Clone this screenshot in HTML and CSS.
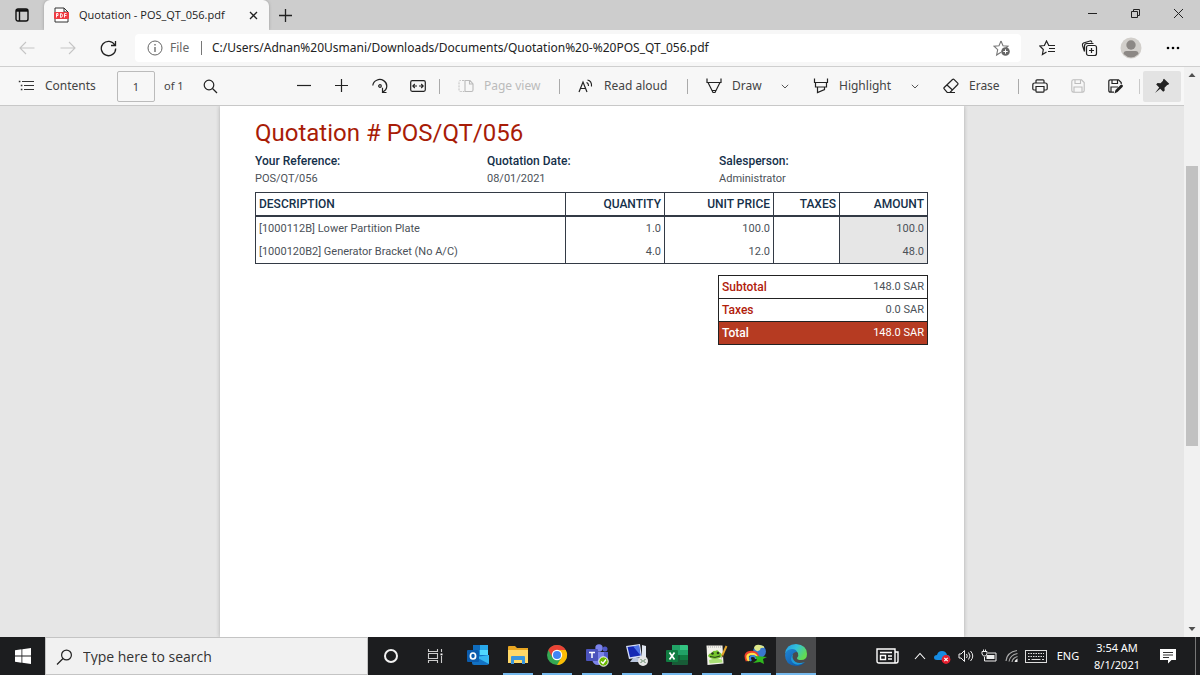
FILE: index.html
```html
<!DOCTYPE html>
<html lang="en">
<head>
<meta charset="utf-8">
<title>Quotation - POS_QT_056.pdf</title>
<link rel="stylesheet" href="styles.css">
</head>
<body>
<header class="titlebar">
  <button class="tab-actions" aria-label="Tab actions menu">
    <svg width="14" height="14" viewBox="0 0 14 14"><rect x="1" y="1" width="12" height="12" rx="2" fill="none" stroke="#111" stroke-width="1.400"/><path d="M1 2.500h12" stroke="#111" stroke-width="2.400"/><path d="M4.500 3v10" stroke="#111" stroke-width="1.400"/></svg>
  </button>
  <div class="tab">
    <svg width="15" height="16" viewBox="0 0 15 16"><path d="M1 15V1h9l4 4v10z" fill="#fff" stroke="#333"/><path d="M10 1v4h4" fill="none" stroke="#333"/><rect x="0" y="5" width="15" height="7" rx="1" fill="#ee3b42"/><path d="M2.500 10.500V6.500h1.500v2H2.500M6.500 6.500v4q2 0 2-2t-2-2M10.500 10.500v-4h2M10.500 8.500h2" fill="none" stroke="#fff" stroke-width=".9"/></svg>
    <span class="tab-title">Quotation - POS_QT_056.pdf</span>
    <button class="tab-close" aria-label="Close tab"><svg width="9" height="9" viewBox="0 0 9 9"><path d="M1 1l7 7M8 1L1 8" stroke="#222" stroke-width="1.300"/></svg></button>
  </div>
  <button class="new-tab" aria-label="New tab"><svg width="13" height="13" viewBox="0 0 13 13"><path d="M6.500 0v13M0 6.500h13" stroke="#222" stroke-width="1.300"/></svg></button>
  <div class="window-controls">
    <button aria-label="Minimize"><svg width="11" height="11" viewBox="0 0 11 11"><path d="M1 5.500h9" stroke="#222"/></svg></button>
    <button aria-label="Restore"><svg width="11" height="11" viewBox="0 0 11 11"><path d="M1.500 3.500h6v6h-6zM3.500 3.500v-2h6v6h-2" fill="none" stroke="#222"/></svg></button>
    <button aria-label="Close"><svg width="11" height="11" viewBox="0 0 11 11"><path d="M1 1l9 9M10 1l-9 9" stroke="#222"/></svg></button>
  </div>
</header>

<nav class="navbar">
  <button class="nav-button" aria-label="Back" disabled><svg width="16" height="14" viewBox="0 0 16 14"><path d="M15.500 7H1M7 1L1 7l6 6" fill="none" stroke="#c5c5c5" stroke-width="1.100"/></svg></button>
  <button class="nav-button" aria-label="Forward" disabled><svg width="16" height="14" viewBox="0 0 16 14"><path d="M.5 7H15M9 1l6 6-6 6" fill="none" stroke="#c5c5c5" stroke-width="1.100"/></svg></button>
  <button class="nav-button" aria-label="Refresh"><svg width="17" height="17" viewBox="0 0 17 17"><path d="M14.800 5A7.200 7.200 0 1 0 15.700 8.500M15.500 1v4.500H11" fill="none" stroke="#222" stroke-width="1.300"/></svg></button>
  <div class="address">
    <svg width="16" height="16" viewBox="0 0 16 16"><circle cx="8" cy="8" r="7" fill="none" stroke="#666"/><path d="M8 7v5M8 4v1.500" stroke="#555" stroke-width="1.200"/></svg>
    <span class="scheme">File</span>
    <input class="url" aria-label="Address" value="C:/Users/Adnan%20Usmani/Downloads/Documents/Quotation%20-%20POS_QT_056.pdf">
    <button class="favorite" aria-label="Add to favorites"><svg width="18" height="17" viewBox="0 0 18 17"><path d="M8 1l2 4.700 5 .5-2 1.800M8 1L6 5.700 1 6.200l3.700 3.400L3.600 15 8 12.200" fill="none" stroke="#777" stroke-width="1.100"/><circle cx="12.500" cy="11.500" r="4.300" fill="#666"/><path d="M12.500 9.300v4.400M10.300 11.500h4.400" stroke="#fff"/></svg></button>
  </div>
  <div class="nav-actions">
    <button aria-label="Favorites"><svg width="17" height="16" viewBox="0 0 17 16"><path d="M10 5.500h-.2L7.500 1 5.400 5.500.8 6l3.500 3.500-.9 5L7.500 12" fill="none" stroke="#222" stroke-width="1.200"/><path d="M9.500 5.500H16M10 8.500h6M9 11.500h7" stroke="#222" stroke-width="1.200"/></svg></button>
    <button aria-label="Collections"><svg width="17" height="17" viewBox="0 0 17 17"><rect x="5.500" y="5.500" width="10" height="10" rx="2" fill="none" stroke="#222" stroke-width="1.200"/><path d="M10.500 8v5M8 10.500h5M3.500 11.500L1.500 5.500Q1 3.700 2.500 3L9 1Q10.500.7 11 2.500M3.500 11.500V6q0-2.500 2.500-2.500h6.500" fill="none" stroke="#222" stroke-width="1.200"/></svg></button>
    <button aria-label="Profile"><svg width="22" height="22" viewBox="0 0 22 22"><circle cx="11" cy="11" r="10.500" fill="#d2cfcb"/><circle cx="11" cy="8" r="4.700" fill="#8c8885"/><path d="M3.500 17q0-3 3-3h9q3 0 3 3-7.500 7-15 0" fill="#8c8885"/></svg></button>
    <button aria-label="Settings and more"><svg width="14" height="4" viewBox="0 0 14 4"><circle cx="2" cy="2" r="1.300"/><circle cx="7" cy="2" r="1.300"/><circle cx="12" cy="2" r="1.300"/></svg></button>
  </div>
</nav>

<main class="viewer">
  <div class="reader">
    <div class="toolbar">
      <button class="tool contents"><svg width="17" height="14" viewBox="0 0 17 14"><path d="M4 2.500h12M6 6.500h10M6 10.500h10" stroke="#333" stroke-width="1.200"/><path d="M.8 2.500h1.600M2.800 6.500h1.600M2.800 10.500h1.600" stroke="#333" stroke-width="1.600"/></svg>Contents</button>
      <input class="page-number" aria-label="Page number" value="1">
      <span class="page-count">of 1</span>
      <button class="tool icon" aria-label="Find"><svg width="15" height="15" viewBox="0 0 15 15"><circle cx="6" cy="6" r="4.800" fill="none" stroke="#222" stroke-width="1.200"/><path d="M9.500 9.500l4.500 4.500" stroke="#222" stroke-width="1.200"/></svg></button>
      <div class="tool-group">
        <button class="tool icon" aria-label="Zoom out"><svg width="14" height="14" viewBox="0 0 14 14"><path d="M0 6.500h14" stroke="#222" stroke-width="1.200"/></svg></button>
        <button class="tool icon" aria-label="Zoom in"><svg width="14" height="14" viewBox="0 0 14 14"><path d="M0 6.500h13M6.500 0v13" stroke="#222" stroke-width="1.200"/></svg></button>
        <button class="tool icon" aria-label="Rotate"><svg width="16" height="16" viewBox="0 0 16 16"><path d="M.8 7.500A7 6.500 0 1 1 11 13.800M10.500 9.800V14.500h4" fill="none" stroke="#222" stroke-width="1.200"/><circle cx="8" cy="8" r="1.300" fill="none" stroke="#222" stroke-width="1.200"/></svg></button>
        <button class="tool icon" aria-label="Fit to width"><svg width="16" height="14" viewBox="0 0 16 14"><rect x=".7" y="1.700" width="14.600" height="10.600" rx="1.500" fill="none" stroke="#222" stroke-width="1.200"/><path d="M2.800 7H7M9 7h4.200M4.800 5l-2 2 2 2M11.200 5l2 2-2 2" fill="none" stroke="#222" stroke-width="1.100"/></svg></button>
        <span class="separator"></span>
        <button class="tool page-view" disabled><svg width="16" height="14" viewBox="0 0 16 14"><path d="M6 1.500H2.500q-1.500 0-1.500 1.500v8q0 1.500 1.500 1.500H6" fill="none" stroke="#c0c0c0" stroke-dasharray="2 1"/><path d="M7 1.500h5l3 3.500v6q0 1.500-1.500 1.500H7zM11.500 1.500V5H15" fill="none" stroke="#bbb" stroke-width="1.100"/></svg>Page view</button>
        <span class="separator"></span>
        <button class="tool read-aloud"><svg width="16" height="15" viewBox="0 0 16 15"><path d="M1 13L5 3l4 10M2.500 9.500h5" fill="none" stroke="#222" stroke-width="1.200"/><path d="M8.500 3.500Q10.500 4 10.500 7M9.500 1Q14 2 13.500 7.500" fill="none" stroke="#222" stroke-width="1.100"/></svg>Read aloud</button>
        <span class="separator"></span>
        <button class="tool draw"><svg width="16" height="16" viewBox="0 0 16 16"><path d="M1 .5v4h14v-4M2 4.500l5 10h2l5-10M6 12.500h4" fill="none" stroke="#222" stroke-width="1.200"/></svg>Draw</button>
        <button class="tool icon" aria-label="Draw options"><svg width="8" height="5" viewBox="0 0 8 5"><path d="M.8.8L4 4 7.200.8" fill="none" stroke="#555"/></svg></button>
        <button class="tool highlight"><svg width="16" height="16" viewBox="0 0 16 16"><path d="M1.500.5v4h13v-4M2.500 4.500v4.500h11V4.500M4.500 9v5.500l7-3V9" fill="none" stroke="#222" stroke-width="1.200"/></svg>Highlight</button>
        <button class="tool icon" aria-label="Highlight options"><svg width="8" height="5" viewBox="0 0 8 5"><path d="M.8.8L4 4 7.200.8" fill="none" stroke="#555"/></svg></button>
        <button class="tool erase"><svg width="16" height="16" viewBox="0 0 16 16"><path d="M9.500 1.500L1.200 9.500q-.7.700 0 1.400l3 3.600H7l7.700-8q.6-.7 0-1.400l-3.500-3.500q-.8-.8-1.700-.1zM4 7l5.500 5M4 14.500h8" fill="none" stroke="#222" stroke-width="1.200"/></svg>Erase</button>
        <span class="separator"></span>
        <button class="tool icon" aria-label="Print"><svg width="16" height="14" viewBox="0 0 16 14"><path d="M4 4V1.800q0-1 1-1h6q1 0 1 1V4M4 11H2q-1.200 0-1.200-1.200V6q0-2 2-2h10.400q2 0 2 2v3.800Q15.200 11 14 11h-2M4 7.500h8v4.700q0 1-1 1H5q-1 0-1-1z" fill="none" stroke="#222" stroke-width="1.200"/></svg></button>
        <button class="tool icon" aria-label="Save" disabled><svg width="14" height="14" viewBox="0 0 14 14"><path d="M2.500.8h8l2.700 2.700v8q0 1.700-1.700 1.700h-9Q.8 13.200.8 11.500v-9Q.8.8 2.500.8zM4 .8v3.700h5.500V.8M3 13V8h8v5" fill="none" stroke="#bdbdbd" stroke-width="1.100"/></svg></button>
        <button class="tool icon" aria-label="Save as"><svg width="16" height="15" viewBox="0 0 16 15"><path d="M6 13.200H2.500Q.8 13.200.8 11.500v-9Q.8.8 2.500.8h8L13.200 3.500V5M4 .8v3.700h5.500V.8M3 13V8h7" fill="none" stroke="#222" stroke-width="1.200"/><path d="M6.500 14.500l1-3.500 5-5q1-.8 2 0t0 2l-5 5z" fill="#222"/></svg></button>
        <span class="separator light"></span>
        <button class="tool icon pinned" aria-label="Unpin toolbar"><svg width="16" height="16" viewBox="0 0 16 16"><path d="M10 .8l5.200 5-1 1-1 .2-2.700 2.800.2 2.700-1.500 1.200-3-3L1 15l4.200-5.500-3-3L3.500 5l3 .2L9 2.700v-1z" fill="#222"/></svg></button>
      </div>
    </div>

    <div class="canvas">
      <article class="page">
        <h1>Quotation # POS/QT/056</h1>
        <dl class="details">
          <div><dt>Your Reference:</dt><dd>POS/QT/056</dd></div>
          <div><dt>Quotation Date:</dt><dd>08/01/2021</dd></div>
          <div><dt>Salesperson:</dt><dd>Administrator</dd></div>
        </dl>
        <table class="lines">
          <colgroup><col><col class="c-quantity"><col class="c-price"><col class="c-taxes"><col class="c-amount"></colgroup>
          <thead><tr><th scope="col">DESCRIPTION</th><th scope="col">QUANTITY</th><th scope="col">UNIT PRICE</th><th scope="col">TAXES</th><th scope="col">AMOUNT</th></tr></thead>
          <tbody>
            <tr><td>[1000112B] Lower Partition Plate</td><td>1.0</td><td>100.0</td><td></td><td>100.0</td></tr>
            <tr><td>[1000120B2] Generator Bracket (No A/C)</td><td>4.0</td><td>12.0</td><td></td><td>48.0</td></tr>
          </tbody>
        </table>
        <table class="totals">
          <tr><th scope="row">Subtotal</th><td>148.0 SAR</td></tr>
          <tr><th scope="row">Taxes</th><td>0.0 SAR</td></tr>
          <tr class="grand"><th scope="row">Total</th><td>148.0 SAR</td></tr>
        </table>
      </article>
    </div>
  </div>
  <div class="scrollbar">
    <svg width="16" height="16" viewBox="0 0 16 16"><path d="M4.500 10L8 6l3.500 4z" fill="#505050"/></svg>
    <div class="track"><div class="thumb"></div></div>
    <svg width="16" height="16" viewBox="0 0 16 16"><path d="M4.500 6L8 10l3.500-4z" fill="#505050"/></svg>
  </div>
</main>

<footer class="taskbar">
  <button class="start" aria-label="Start"><svg width="16" height="16" viewBox="0 0 16 16"><path d="M0 2.300L6.500 1.300V7.500H0zM7.300 1.200L16 0v7.500H7.300zM0 8.400h6.500v6.300L0 13.700zM7.300 8.400H16V16l-8.700-1.200z" fill="#fff"/></svg></button>
  <label class="search">
    <svg width="17" height="17" viewBox="0 0 17 17"><circle cx="10.500" cy="6" r="4.900" fill="none" stroke="#222" stroke-width="1.200"/><path d="M7 9.500L1 15.500" stroke="#222" stroke-width="1.300"/></svg>
    <input placeholder="Type here to search" aria-label="Type here to search">
  </label>
  <button class="system" aria-label="Cortana"><svg width="16" height="16" viewBox="0 0 16 16"><circle cx="8" cy="8" r="6" fill="none" stroke="#f2f2f2" stroke-width="2"/></svg></button>
  <button class="system" aria-label="Task view"><svg width="17" height="16" viewBox="0 0 17 16"><path d="M1.500 1v2.500h9V1M1.500 15v-2.500h9V15M1.500 5.500h9v5h-9zM14.500 1v3M14.500 8v7" fill="none" stroke="#ccc" stroke-width="1.100"/><path d="M13.500 5.500h2v1.800h-2z" fill="#fff"/></svg></button>
  <div class="apps">
    <button aria-label="Outlook"><svg width="24" height="22" viewBox="0 0 24 22"><path d="M7 1h15v10H7z" fill="#1490df"/><path d="M7 1h7v5H7z" fill="#0f6cbd"/><path d="M14 6h8v5h-8z" fill="#50d9ff"/><path d="M14 1h8v5h-8z" fill="#28a8ea"/><path d="M6 11l17 0v8q0 2-2 2H8q-2 0-2-2z" fill="#1272c4"/><path d="M23 11v9L10 13z" fill="#35b8f1"/><rect x="1" y="6" width="12" height="12" rx="1" fill="#0b5cad"/><ellipse cx="7" cy="12" rx="2.600" ry="3" fill="none" stroke="#fff" stroke-width="1.700"/></svg></button>
    <button class="running" aria-label="File Explorer"><svg width="22" height="20" viewBox="0 0 22 20"><path d="M1 2q0-1 1-1h6l2 2h11v5H1z" fill="#e8a622"/><path d="M1 5h20v13H1z" fill="#ffd867"/><path d="M4 19v-7q0-1 1-1h12q1 0 1 1v7h-3v-4H7v4z" fill="#3a96dd"/></svg></button>
    <button class="running" aria-label="Chrome"><svg width="22" height="22" viewBox="0 0 22 22"><circle cx="11" cy="11" r="10" fill="#34a853"/><path d="M11 11L2.300 6A10 10 0 0 1 19.700 6z" fill="#ea4335"/><path d="M11 6h8.700A10 10 0 0 1 11 21l4.500-7.500z" fill="#fbbc05"/><path d="M2.300 6L6.500 13.500 11 11V6z" fill="#ea4335"/><circle cx="11" cy="11" r="5.200" fill="#fff"/><circle cx="11" cy="11" r="4" fill="#4285f4"/></svg></button>
    <button class="running" aria-label="Teams"><svg width="24" height="24" viewBox="0 0 24 24"><circle cx="20" cy="6" r="2.500" fill="#5059c9"/><circle cx="14" cy="5" r="3.700" fill="#7b83eb"/><path d="M17 9h6v7q-1 3-5 2z" fill="#5059c9"/><path d="M8 9h11v7q-1 6-6 6t-6-6z" fill="#7b83eb"/><rect x="1" y="6" width="12" height="12" rx="1" fill="#4b53bc"/><path d="M4 9.500h6M7 9.500V15" stroke="#fff" stroke-width="1.500"/><circle cx="18.500" cy="18.500" r="4.700" fill="#6bb700" stroke="#fff"/><path d="M16 18.500l2 2 3-4" fill="none" stroke="#fff" stroke-width="1.400"/></svg></button>
    <button class="running" aria-label="Remote session"><svg width="24" height="24" viewBox="0 0 24 24"><path d="M1 3l14-2 2 13-13 2z" fill="#d5def5"/><path d="M2.500 4L14 2.500l1.500 10-10.500 1.700z" fill="#1428b4"/><path d="M8 3.200l6-.7 1.500 10z" fill="#4e75e8"/><path d="M17 2l4 1v12h-4z" fill="#dfe5ee"/><path d="M8 15h6l2 4H5z" fill="#b8c5dd"/><circle cx="18" cy="18" r="5" fill="#e5e5e5"/><path d="M15.500 16l2 2-2 2M20.500 16l-2 2 2 2" fill="none" stroke="#58805c"/></svg></button>
    <button class="running" aria-label="Excel"><svg width="24" height="22" viewBox="0 0 24 22"><path d="M7 1h8v20H8q-1 0-1-1z" fill="#21a366"/><path d="M15 1h7q1 0 1 1v4h-8z" fill="#33c481"/><path d="M15 6h8v5h-8z" fill="#21a366"/><path d="M7 11h16v9q0 1-1 1H8q-1 0-1-1z" fill="#185c37"/><path d="M15 11h8v5h-8z" fill="#107c41"/><rect x="1" y="6" width="12" height="12" rx="1" fill="#107c41"/><path d="M4.500 8.500l5 7M9.500 8.500l-5 7" stroke="#fff" stroke-width="1.700"/></svg></button>
    <button class="running" aria-label="Notepad++"><svg width="24" height="24" viewBox="0 0 24 24"><path d="M1.500 2.500h16l1 18-16 1.500z" fill="#f3f2ea"/><path d="M3 4h14" stroke="#aaa" stroke-dasharray="1 1"/><path d="M3 13q1-3 4-3 1-3 3-2 3-2 4 1 3 1 3 4-2 3-7 3t-7-3z" fill="#76c52e"/><circle cx="7.500" cy="10.500" r="1.300" fill="#263c19"/><circle cx="13" cy="10" r="1.300" fill="#263c19"/><path d="M5 13.500q5 2 10-.5" fill="none" stroke="#263c19"/><path d="M4 17q6-2 13-.5l.5 3-13 1z" fill="#a9df75"/><path d="M21.500 3L17 13" stroke="#e3a52c" stroke-width="2"/><path d="M17.500 12L16 16l2.500-3.200z" fill="#654724"/></svg></button>
    <button class="running" aria-label="Download manager"><svg width="24" height="22" viewBox="0 0 24 22"><circle cx="15.500" cy="7.500" r="6.500" fill="#3977ce"/><path d="M10 4q1-4 6-3 5 1 4 3-4-1-4 2-4 3-6-2z" fill="#dfe98b"/><path d="M3 17Q-1 8 8 8q5 0 6 5" fill="none" stroke="#ed3f2c" stroke-width="2.500"/><path d="M5 17Q1 10 8 10q4 0 5 4" fill="none" stroke="#ffe04c" stroke-width="2.500"/><path d="M7 17q-3-5 2-5 3 0 3 3" fill="none" stroke="#3886e0" stroke-width="2"/><path d="M11 12l12 1-4 2 1 5-4-2-7 1 4-3z" fill="#30b91f"/></svg></button>
    <button class="running active" aria-label="Edge"><svg width="24" height="24" viewBox="0 0 24 24"><defs><linearGradient id="edge-top" x2="1" y2=".5"><stop stop-color="#2495e5"/><stop offset=".5" stop-color="#32c1db"/><stop offset="1" stop-color="#62db52"/></linearGradient><linearGradient id="edge-base" y2="1"><stop stop-color="#2087d6"/><stop offset="1" stop-color="#0d4f9f"/></linearGradient></defs><path d="M1 11Q2 1 12 1q11 1 11 10 0 6-6 6-4 0-4-2 2-2 1-5-2-3-6-3-5 0-7 4z" fill="url(#edge-top)"/><path d="M1 12q1-6 7-6 4 0 5 3-4 0-5 4-1 7 6 8 4 .5 7-2-3 4-9 4Q1 22 1 12z" fill="url(#edge-base)"/><path d="M9 11q-4 5 0 9 5 4 12-1-9 3-12-3-1-2 0-5z" fill="#1e9ad8"/></svg></button>
  </div>
  <div class="tray">
    <button class="news" aria-label="News"><svg width="23" height="16" viewBox="0 0 23 16"><path d="M1 1h18v14H3q-2 0-2-2zM19 4h3v9q0 2-2 2h-2" fill="none" stroke="#fff" stroke-width="1.400"/><path d="M4 4.500h12M12 8h4M12 11h4" stroke="#fff" stroke-width="1.300"/><path d="M4.500 7.500h5v4h-5z" fill="none" stroke="#fff" stroke-width="1.400"/></svg></button>
    <button aria-label="Show hidden icons"><svg width="12" height="8" viewBox="0 0 12 8"><path d="M1 7l5-5.500L11 7" fill="none" stroke="#fff" stroke-width="1.100"/></svg></button>
    <button aria-label="OneDrive"><svg width="17" height="15" viewBox="0 0 17 15"><path d="M3 11Q0 11 0 8.500T3 6q1-4 5-4t5 4q3 0 3 3v2z" fill="#168ce3"/><circle cx="12" cy="10.500" r="4.400" fill="#e51f2f"/><path d="M10.300 8.800l3.400 3.400M13.700 8.800l-3.400 3.400" stroke="#fff" stroke-width="1.100"/></svg></button>
    <button aria-label="Volume"><svg width="16" height="14" viewBox="0 0 16 14"><path d="M1 5h2l3.500-3.500v11L3 9H1zM8.500 5q1.500 2 0 4M10.500 3.500q3 3.500 0 7M12.500 2q4.500 5 0 10" fill="none" stroke="#eee"/></svg></button>
    <button aria-label="Battery"><svg width="16" height="14" viewBox="0 0 16 14"><path d="M5.500 6h8v4h-8z" fill="#eee"/><path d="M7 4h8v8H3.500V8M1 2.500h5V5L4.500 7h-2L1 5zM2.500.5v2M4.500.5v2" fill="none" stroke="#eee"/></svg></button>
    <button aria-label="Wi-Fi"><svg width="14" height="14" viewBox="0 0 14 14"><path d="M1 12Q2 3 12 1.500M4 12.500Q5 6 12.500 4.500M7 13q.5-4 5.500-5.500" fill="none" stroke="#aaa" stroke-width="1.200"/><path d="M9.500 13q0-2 3-3.500V13z" fill="#eee"/></svg></button>
    <button class="keyboard" aria-label="Touch keyboard"><svg width="22" height="13" viewBox="0 0 22 13"><rect x=".5" y=".5" width="21" height="12" fill="none" stroke="#ddd"/><path d="M3 3.500h16M3 6.500h16" stroke="#ddd" stroke-dasharray="1.500 1"/><path d="M3 9.500h2M6.500 9.500h9M17 9.500h2" stroke="#ddd"/></svg></button>
    <button class="language">ENG</button>
    <button class="clock"><span>3:54 AM</span><span>8/1/2021</span></button>
    <button class="notifications" aria-label="Notifications"><svg width="16" height="16" viewBox="0 0 16 16"><path d="M0 1h16v11h-4.500L8 15.500V12H0z" fill="#fff"/><path d="M3 4.500h10M3 7h10M3 9.500h6" stroke="#333"/></svg></button>
    <button class="show-desktop" aria-label="Show desktop"></button>
  </div>
</footer>
</body>
</html>
```
FILE: styles.css
```css
* { box-sizing: border-box; }

body {
  margin: 0;
  height: 100vh;
  display: flex;
  flex-direction: column;
  overflow: hidden;
  background: #f7f7f7;
  color: #222;
  font: 12px/16px "Noto Sans", "Open Sans", sans-serif;
}

button, input {
  margin: 0;
  padding: 0;
  border: 0;
  background: none;
  color: inherit;
  font: inherit;
}

button {
  display: flex;
  align-items: center;
  justify-content: center;
  flex: none;
}

input { min-width: 0; outline: 0; }
svg { display: block; flex: none; }

/* Title bar */
.titlebar {
  flex: none;
  height: 30px;
  display: flex;
  background: #cdcdcd;
}
.tab-actions { width: 44px; }
.tab {
  width: 225px;
  display: flex;
  align-items: center;
  padding: 0 10px;
  border-radius: 6px 6px 0 0;
  background: #f7f7f7;
  box-shadow: 0 0 3px #999;
  clip-path: inset(0 -3px 0 -3px);
}
.tab-title {
  flex: 1;
  padding-left: 10px;
  font-family: "Open Sans", sans-serif;
  font-size: 11px;
  white-space: nowrap;
}
.tab-close { width: 12px; height: 16px; }
.new-tab { width: 32px; }
.window-controls { margin-left: auto; display: flex; }
.window-controls button { width: 43px; padding-bottom: 4px; }

/* Navigation bar */
.navbar {
  flex: none;
  height: 37px;
  display: flex;
  align-items: center;
  padding: 0 6px;
  border-bottom: 1px solid #cfcfcf;
}
.nav-button { width: 41px; height: 28px; }
.address {
  flex: 1;
  min-width: 0;
  height: 28px;
  margin-left: 6px;
  padding: 0 10px 0 12px;
  display: flex;
  align-items: center;
  border-radius: 4px;
  background: #fff;
}
.scheme {
  width: 39px;
  margin-right: 10px;
  padding-left: 7px;
  color: #666;
  background: linear-gradient(#777, #777) right / 1px 14px no-repeat;
}
.url { flex: 1; }
.nav-actions { display: flex; padding-left: 5px; }
.nav-actions button { width: 42px; height: 28px; }

/* Reader */
.viewer { flex: 1; min-height: 0; display: flex; }
.reader { flex: 1; min-width: 0; display: flex; flex-direction: column; }
.toolbar {
  flex: none;
  height: 39px;
  display: flex;
  align-items: center;
  padding: 0 3px 0 18px;
  border-bottom: 1px solid #c8c8c8;
  color: #444;
}
.tool { height: 31px; gap: 10px; justify-content: flex-start; white-space: nowrap; }
.tool:disabled { color: #bbb; }
.tool.icon { width: 38px; justify-content: center; }
.contents { width: 99px; }
.page-number {
  width: 38px;
  height: 31px;
  border: 1px solid #bbb;
  border-radius: 2px;
  text-align: center;
  font-size: 11px;
}
.page-count { width: 36px; padding-left: 9px; font-size: 11px; }
.tool-group { display: flex; align-items: center; margin-left: auto; }
.page-view { width: 115px; padding-left: 16px; }
.read-aloud { width: 123px; padding-left: 16px; }
.draw { width: 76px; padding-left: 16px; }
.highlight { width: 92px; padding-left: 9px; }
.erase { width: 82px; padding-left: 9px; }
.separator {
  width: 5px;
  height: 15px;
  background: linear-gradient(#aaa, #aaa) center / 1px 100% no-repeat;
}
.separator.light { width: 8px; opacity: .6; }
.pinned { background: #e3e3e3; border-radius: 2px; }

.canvas {
  flex: 1;
  min-height: 0;
  display: flex;
  justify-content: center;
  background: #e6e6e6;
}
.page {
  width: 744px;
  padding: 15px 36px 15px 35px;
  background: #fff;
  box-shadow: 0 0 4px #aaa;
  clip-path: inset(0 -4px 0 -4px);
  color: #4b5158;
  font: 11px/17px Roboto, sans-serif;
}
.page h1 {
  margin: 0;
  color: #a81c07;
  font-size: 24px;
  font-weight: 400;
  line-height: 25px;
}
.details {
  display: grid;
  grid-template-columns: 232px 232px 1fr;
  margin: 7px 0 5px;
}
.details dt, .page th { color: #15304a; font-size: 12px; font-weight: 500; }
.details dd { margin: 0; }

.lines, .totals { border-collapse: collapse; border: 1px solid #333a45; }
.lines { width: 100%; table-layout: fixed; }
.c-quantity { width: 99px; }
.c-price { width: 109px; }
.c-taxes { width: 66px; }
.c-amount { width: 88px; }
.lines th, .lines td {
  padding: 3px;
  border-left: 1px solid #333a45;
  text-align: right;
}
.lines th { border-bottom: 2px solid #333a45; line-height: 16px; }
.lines td { padding: 3px; }
.lines th:first-child, .lines td:first-child { text-align: left; }
.lines td:last-child { background: #e6e6e6; }

.totals { width: 210px; margin: 11px 0 0 auto; border-color: #222; line-height: 16px; }
.totals tr { border-bottom: 1px solid #222; }
.page .totals th { padding: 3px; text-align: left; color: #b1200b; }
.totals td { padding: 3px; text-align: right; }
.totals .grand { background: #b63b22; color: #fff; }
.page .totals .grand th { color: #fff; }

.scrollbar {
  width: 16px;
  display: flex;
  flex-direction: column;
  background: #f1f1f1;
}
.track { flex: 1; display: grid; grid-template-rows: 83fr 280fr 175fr; padding: 0 2px; }
.thumb { grid-row: 2; background: #c1c1c1; }

/* Taskbar */
.taskbar {
  flex: none;
  height: 38px;
  display: flex;
  background: #1c1d1f;
  color: #fff;
}
.start { width: 45px; }
.search {
  width: 323px;
  min-width: 0;
  display: flex;
  align-items: center;
  gap: 10px;
  padding: 2px 10px 0;
  border: 1px solid #c4c4c4;
  background: #f1f1f1;
  color: #333;
  font-family: "Open Sans", sans-serif;
  font-size: 14px;
}
.search input { flex: 1; }
.search input::placeholder { color: #333; opacity: 1; }
.system { width: 45px; }
.apps { width: 358px; display: flex; }
.apps button {
  flex: 1;
  border-bottom: 2px solid transparent;
  background-clip: padding-box;
}
.apps .running {
  background: linear-gradient(#76b9ed, #76b9ed) bottom / 30px 2px no-repeat border-box;
}
.apps .active {
  border-bottom-color: #76b9ed;
  background: #4a4b4d;
}
.tray { margin-left: auto; display: flex; }
.tray button { width: 23px; }
.tray .news { width: 42px; }
.tray .keyboard { width: 26px; }
.tray .language { width: 38px; font-size: 11px; }
.tray .clock { width: 60px; flex-direction: column; font-size: 11px; line-height: 17px; }
.tray .notifications { width: 42px; }
.tray .show-desktop { width: 5px; margin-left: 6px; border-left: 1px solid #777; }
```
